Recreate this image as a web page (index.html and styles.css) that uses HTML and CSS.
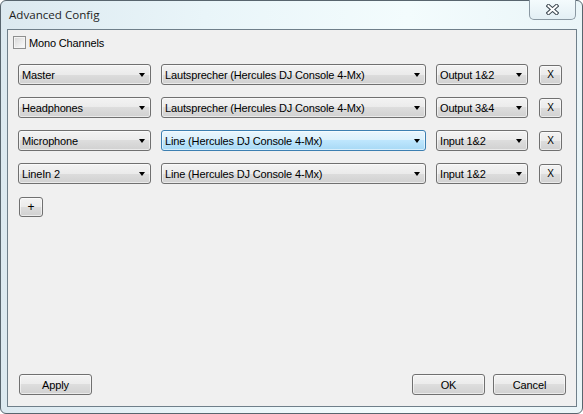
FILE: index.html
```html
<!DOCTYPE html>
<html lang="en">
<head>
    <meta charset="UTF-8">
    <meta name="viewport" content="width=device-width, initial-scale=1.0">
    <title>Advanced Config</title>
    <link rel="stylesheet" href="styles.css">
</head>
<body>
    <div class="window">
        <div class="title-bar">
            <span class="title">Advanced Config</span>
            <button class="close-button" aria-label="Close">
                <svg width="13" height="11" viewBox="0 0 13 11">
                    <path d="M2.5 2 L10.5 9 M10.5 2 L2.5 9" stroke="#3d4850" stroke-width="4" stroke-linecap="square" fill="none"/>
                    <path d="M2.5 2 L10.5 9 M10.5 2 L2.5 9" stroke="#ffffff" stroke-width="2" stroke-linecap="square" fill="none"/>
                </svg>
            </button>
        </div>

        <div class="client">
            <label class="check-row">
                <span class="check-box"></span>
                <span>Mono Channels</span>
            </label>

            <div class="channels">
                <div class="channel-row">
                    <div class="combo combo-name"><span>Master</span><i class="arrow"></i></div>
                    <div class="combo combo-device"><span>Lautsprecher (Hercules DJ Console 4-Mx)</span><i class="arrow"></i></div>
                    <div class="combo combo-port"><span>Output 1&amp;2</span><i class="arrow"></i></div>
                    <button class="btn remove-button">X</button>
                </div>
                <div class="channel-row">
                    <div class="combo combo-name"><span>Headphones</span><i class="arrow"></i></div>
                    <div class="combo combo-device"><span>Lautsprecher (Hercules DJ Console 4-Mx)</span><i class="arrow"></i></div>
                    <div class="combo combo-port"><span>Output 3&amp;4</span><i class="arrow"></i></div>
                    <button class="btn remove-button">X</button>
                </div>
                <div class="channel-row">
                    <div class="combo combo-name"><span>Microphone</span><i class="arrow"></i></div>
                    <div class="combo combo-device hot"><span>Line (Hercules DJ Console 4-Mx)</span><i class="arrow"></i></div>
                    <div class="combo combo-port"><span>Input 1&amp;2</span><i class="arrow"></i></div>
                    <button class="btn remove-button">X</button>
                </div>
                <div class="channel-row">
                    <div class="combo combo-name"><span>LineIn 2</span><i class="arrow"></i></div>
                    <div class="combo combo-device"><span>Line (Hercules DJ Console 4-Mx)</span><i class="arrow"></i></div>
                    <div class="combo combo-port"><span>Input 1&amp;2</span><i class="arrow"></i></div>
                    <button class="btn remove-button">X</button>
                </div>
            </div>

            <button class="btn add-button">+</button>

            <div class="footer">
                <button class="btn dialog-button">Apply</button>
                <div class="spacer"></div>
                <button class="btn dialog-button">OK</button>
                <button class="btn dialog-button">Cancel</button>
            </div>
        </div>
    </div>
</body>
</html>
```

FILE: styles.css
```css
body {
    margin: 0;
    font-family: "Liberation Sans", Arial, sans-serif;
    font-size: 11px;
    letter-spacing: -0.15px;
    color: #000;
    background: #ffffff;
}

/* Window frame (Aero basic look) */
.window {
    width: 583px;
    height: 414px;
    box-sizing: border-box;
    border: 1px solid #58656e;
    border-radius: 6px;
    padding: 0 5px 6px 6px;
    display: flex;
    flex-direction: column;
    background: linear-gradient(to right, #dce9f0 0%, #e9f5f9 35%, #f3fcfd 70%, #eaf5f8 100%);
}

.title-bar {
    height: 28px;
    display: flex;
    align-items: flex-start;
    justify-content: space-between;
}

.title {
    margin-left: 2px;
    line-height: 28px;
    font-family: "Open Sans", "Liberation Sans", sans-serif;
    font-size: 11.6px;
    letter-spacing: 0;
    color: #1e1e1e;
}

.close-button {
    width: 47px;
    height: 20px;
    margin-top: -1px;
    margin-right: 1px;
    padding: 0;
    border: 1px solid #8a98a2;
    border-top: none;
    border-radius: 0 0 5px 5px;
    background: linear-gradient(#f4fbfd, #e3eff4);
    display: flex;
    align-items: center;
    justify-content: center;
}

/* Client area */
.client {
    flex: 1;
    display: flex;
    flex-direction: column;
    border: 1px solid #6f7f8a;
    background: #f0f0f0;
    padding: 6px 10px 11px 10px;
}

.check-row {
    display: flex;
    align-items: center;
    gap: 3px;
    height: 13px;
    margin-left: -5px;
}

.check-box {
    width: 13px;
    height: 13px;
    box-sizing: border-box;
    border: 1px solid #8e8f8f;
    background: linear-gradient(135deg, #d6d6d6, #fdfdfd);
    box-shadow: inset 0 0 0 1px #f4f4f4;
}

.channels {
    margin-top: 15px;
    display: flex;
    flex-direction: column;
    gap: 12px;
}

.channel-row {
    display: flex;
    align-items: center;
    gap: 10px;
    height: 21px;
}

/* Win7 style combo boxes and buttons */
.combo,
.btn {
    box-sizing: border-box;
    height: 21px;
    border: 1px solid #707070;
    border-radius: 3px;
    background: linear-gradient(#f3f3f3 0%, #ebebeb 50%, #dddddd 50%, #d1d1d1 100%);
    box-shadow: inset 0 0 0 1px rgba(255, 255, 255, 0.55);
    font-family: inherit;
    font-size: 11px;
    letter-spacing: inherit;
    color: #000;
}

.combo {
    display: flex;
    align-items: center;
    justify-content: space-between;
    padding: 0 4px 0 3px;
    white-space: nowrap;
}

.combo.hot {
    border-color: #3c7fb1;
    background: linear-gradient(#eaf6fd 0%, #d9f0fc 50%, #bee6fd 50%, #a7d9f5 100%);
}

.arrow {
    width: 0;
    height: 0;
    border-left: 3.5px solid transparent;
    border-right: 3.5px solid transparent;
    border-top: 4px solid #000;
    margin: 1px 1px 0 0;
}

.combo-name { width: 133px; }
.combo-device { width: 265px; }
.combo-port { width: 92px; }

.btn {
    padding: 0;
    display: flex;
    align-items: center;
    justify-content: center;
}

.remove-button {
    width: 23px;
    height: 20px;
    margin-left: 1px;
    font-size: 10px;
}

.add-button {
    width: 24px;
    height: 20px;
    margin: 13px 0 0 1px;
    font-size: 12px;
}

.footer {
    margin-top: auto;
    display: flex;
    gap: 8px;
    padding-left: 1px;
}

.spacer {
    flex: 1;
}

.dialog-button {
    width: 73px;
    height: 21px;
}
```
